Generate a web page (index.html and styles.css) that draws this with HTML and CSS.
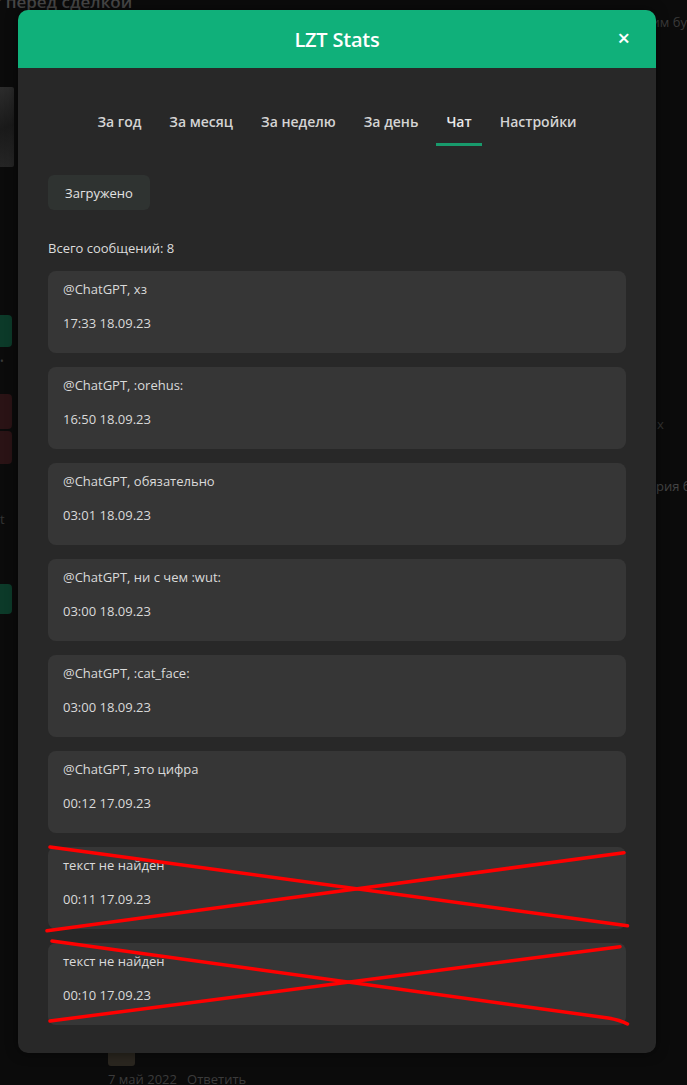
FILE: index.html
```html
<!DOCTYPE html>
<html lang="ru">
<head>
<meta charset="utf-8">
<title>LZT Stats</title>
<link rel="stylesheet" href="styles.css">
</head>
<body>
<div class="bg-page">
  <div class="bg-head">
    <div class="bg-title">Гарант перед сделкой</div>
    <div class="bg-row"><span class="bg-l">Факт</span><span class="bg-r">им бу</span></div>
    <div class="bg-row"><span class="bg-l">риса</span></div>
  </div>
  <div class="bg-cols">
    <div class="bg-left">
      <div class="bg-img"></div>
      <div class="bg-btn green b1"></div>
      <div class="bg-dot">•</div>
      <div class="bg-btn red b2"></div>
      <div class="bg-btn red b3"></div>
      <div class="bg-t">t</div>
      <div class="bg-btn green b4"></div>
    </div>
    <div class="bg-mid">
      <div class="bg-foot">
        <div class="bg-ava"></div>
        <div class="bg-meta">7 май 2022 &nbsp; Ответить</div>
      </div>
    </div>
    <div class="bg-right">
      <div class="bg-x">х</div>
      <div class="bg-txt">рия б</div>
    </div>
  </div>
</div>

<div class="modal">
  <div class="modal-header">
    <div class="modal-title">LZT Stats</div>
    <div class="modal-close">×</div>
  </div>
  <div class="modal-body">
    <nav class="tabs">
      <span class="tab">За год</span>
      <span class="tab">За месяц</span>
      <span class="tab">За неделю</span>
      <span class="tab">За день</span>
      <span class="tab active">Чат</span>
      <span class="tab">Настройки</span>
    </nav>
    <div class="btn-row"><button class="btn">Загружено</button></div>
    <div class="total">Всего сообщений: 8</div>
    <div class="list">
      <div class="msg"><div class="msg-text">@ChatGPT, хз</div><div class="msg-date">17:33 18.09.23</div></div>
      <div class="msg"><div class="msg-text">@ChatGPT, :orehus:</div><div class="msg-date">16:50 18.09.23</div></div>
      <div class="msg"><div class="msg-text">@ChatGPT, обязательно</div><div class="msg-date">03:01 18.09.23</div></div>
      <div class="msg"><div class="msg-text">@ChatGPT, ни с чем :wut:</div><div class="msg-date">03:00 18.09.23</div></div>
      <div class="msg"><div class="msg-text">@ChatGPT, :cat_face:</div><div class="msg-date">03:00 18.09.23</div></div>
      <div class="msg"><div class="msg-text">@ChatGPT, это цифра</div><div class="msg-date">00:12 17.09.23</div></div>
      <div class="msg crossed">
        <div class="msg-text">текст не найден</div><div class="msg-date">00:11 17.09.23</div>
        <svg class="cross" viewBox="0 0 578 82" width="578" height="82">
          <path d="M2 0 L579.5 78.7" />
          <path d="M-1 83.7 L576 5.7" />
        </svg>
      </div>
      <div class="msg crossed">
        <div class="msg-text">текст не найден</div><div class="msg-date">00:10 17.09.23</div>
        <svg class="cross" viewBox="0 0 578 82" width="578" height="82">
          <path d="M4 -2 L560 75 Q572 77 579.5 81" />
          <path d="M2 78 L572 3.7" />
        </svg>
      </div>
    </div>
  </div>
</div>
</body>
</html>
```
FILE: styles.css
```css
html, body {
  margin: 0;
  padding: 0;
}
body {
  background: #0b0b0b;
  font-family: "Open Sans", "Noto Sans", sans-serif;
  width: 687px;
  height: 1085px;
  overflow: hidden;
  position: relative;
}

/* faint page behind the overlay */
.bg-page {
  color: #3a3a3a;
  font-size: 14px;
}
.bg-head {
  margin-left: -58px;
  width: 745px;
}
.bg-title {
  font-size: 17px;
  font-weight: 600;
  line-height: 18px;
  margin-top: -7px;
  color: #474747;
}
.bg-row {
  display: flex;
  justify-content: space-between;
  line-height: 15px;
  font-size: 13px;
  margin-top: 4px;
}
.bg-row:last-child { margin-top: 0; }
.bg-cols {
  display: grid;
  grid-template-columns: 14px 1fr 31px;
}
.bg-left { display: flex; flex-direction: column; }
.bg-img {
  margin-top: 42px;
  height: 80px;
  background: linear-gradient(160deg, #2c2c2c, #1a1a1a 50%, #262626);
  border-radius: 0 2px 2px 0;
}
.bg-btn { width: 12px; border-radius: 0 4px 4px 0; }
.green { background: #0c3a29; }
.red { background: #2a1315; }
.b1 { margin-top: 148px; height: 32px; }
.bg-dot { margin-top: 8px; font-size: 10px; line-height: 12px; color: #3a3a3a; }
.b2 { margin-top: 27px; height: 35px; }
.b3 { margin-top: 2px; height: 33px; }
.bg-t { margin-top: 48px; font-size: 13px; line-height: 14px; color: #333; }
.b4 { margin-top: 58px; height: 30px; }
.bg-mid { display: flex; flex-direction: column; }
.bg-foot {
  margin-top: 997px;
  margin-left: 94px;
}
.bg-ava {
  width: 27px;
  height: 24px;
  background: #2a261f;
  border-radius: 3px;
}
.bg-meta {
  font-size: 13px;
  color: #3b3b3b;
  margin-top: 4px;
}
.bg-right { padding-top: 370px; font-size: 13px; line-height: 18px; white-space: nowrap; }
.bg-x { padding-left: 1px; color: #333; }
.bg-txt { margin-top: 44px; color: #444; }

/* modal (overlay) */
.modal {
  position: absolute;
  left: 18px;
  top: 10px;
  width: 638px;
  background: #282828;
  border-radius: 10px;
  box-shadow: 0 0 12px rgba(0,0,0,0.5);
}
.modal-header {
  height: 58px;
  background: #10b07a;
  border-radius: 10px 10px 0 0;
  display: flex;
  align-items: center;
  justify-content: center;
  position: relative;
}
.modal-title {
  color: #ffffff;
  font-size: 20px;
  font-weight: 600;
  letter-spacing: -0.2px;
}
.modal-close {
  position: absolute;
  right: 26px;
  top: 14px;
  color: #fff;
  font-size: 22px;
  font-weight: 600;
  line-height: 26px;
}
.modal-body {
  padding: 34px 30px 28px;
}
.tabs {
  display: flex;
  justify-content: center;
  gap: 8px;
}
.tab {
  padding: 10px 10px 11px;
  line-height: 20px;
  font-size: 14px;
  font-weight: 600;
  color: #d4d4d4;
  border-bottom: 3px solid transparent;
}
.tab.active {
  color: #e8e8e8;
  border-bottom-color: #189a6c;
}
.btn-row { margin-top: 29px; }
.btn {
  font-family: inherit;
  background: #2f3331;
  border: none;
  border-radius: 6px;
  color: #e2e2e2;
  font-size: 13px;
  font-weight: 500;
  height: 35px;
  padding: 0 15px;
  width: 102px;
}
.total {
  margin-top: 28px;
  line-height: 20px;
  font-size: 13px;
  color: #dcdcdc;
}
.list {
  margin-top: 13px;
  display: flex;
  flex-direction: column;
  gap: 14px;
}
.msg {
  background: #363636;
  border-radius: 8px;
  padding: 8px 15px 20px;
  font-size: 13px;
  line-height: 20px;
  color: #dadada;
  position: relative;
}
.msg-date { margin-top: 14px; }
.cross {
  position: absolute;
  left: 0;
  top: 0;
  overflow: visible;
  fill: none;
  stroke: #ff0000;
  stroke-width: 3.5;
  stroke-linecap: round;
}
```
